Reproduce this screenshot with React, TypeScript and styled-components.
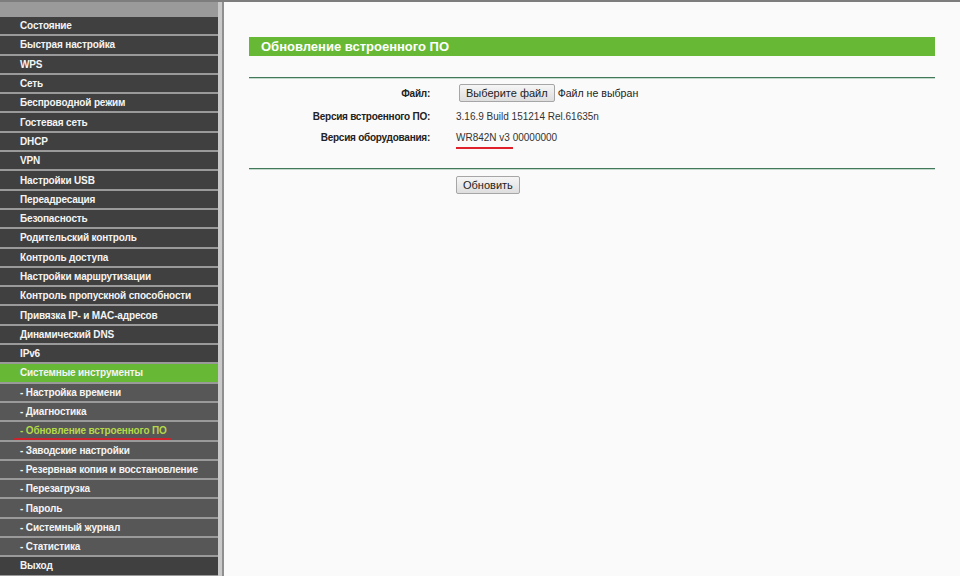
import React from "react";
import styled, { createGlobalStyle } from "styled-components";

const Global = createGlobalStyle`
  html, body { margin: 0; padding: 0; }
  body { font-family: "Liberation Sans", Arial, sans-serif; background: #fafafa; }
`;

const Page = styled.div`
  display: flex;
  width: 960px;
  height: 576px;
  overflow: hidden;
  border-top: 2px solid #7d7d7d;
  box-sizing: border-box;
`;

const Sidebar = styled.nav`
  width: 218px;
  flex: none;
  display: flex;
  flex-direction: column;
  background: #9a9a9a;
  padding-top: 15px;
`;

const Divider = styled.div`
  width: 6px;
  flex: none;
  background: #c9c9c9;
  border-right: 2px solid #8f8f8f;
  box-sizing: border-box;
`;

type ItemKind = "main" | "sub" | "active" | "current";

const Item = styled.div<{ $kind: ItemKind }>`
  height: 19.3px;
  flex: none;
  box-sizing: border-box;
  border-bottom: 2px solid #9a9a9a;
  padding-left: 20px;
  display: flex;
  align-items: center;
  font-size: 10px;
  letter-spacing: -0.15px;
  font-weight: bold;
  white-space: nowrap;
  background: ${(p) =>
    p.$kind === "main" ? "#404040" : p.$kind === "active" ? "#67b935" : "#575757"};
  color: ${(p) => (p.$kind === "current" ? "#b4d94a" : "#f4f4f4")};
`;

const Marked = styled.span`
  position: relative;
  &::after {
    content: "";
    position: absolute;
    left: -6px;
    right: -4px;
    bottom: -4px;
    height: 2px;
    background: #d0202a;
    border-radius: 1px;
  }
`;

const Content = styled.main`
  flex: 1;
  padding: 35px 25px 0 25px;
  background: #fafafa;
`;

const Title = styled.div`
  height: 19px;
  background: #67b935;
  color: #fff;
  font-size: 13px;
  font-weight: bold;
  display: flex;
  align-items: center;
  padding-left: 12px;
`;

const Rule = styled.div<{ $top: number }>`
  margin-top: ${(p) => p.$top}px;
  height: 0;
  border-top: 1px solid #41795a;
  border-bottom: 1px solid #c3d9cb;
`;

const Form = styled.div`
  display: grid;
  grid-template-columns: 181px 1fr;
  column-gap: 26px;
  padding-top: 4px;
`;

const Label = styled.div<{ $h: number }>`
  height: ${(p) => p.$h}px;
  display: flex;
  align-items: center;
  justify-content: flex-end;
  font-size: 10px;
  letter-spacing: -0.25px;
  font-weight: bold;
  color: #222;
`;

const Value = styled.div<{ $h: number }>`
  height: ${(p) => p.$h}px;
  display: flex;
  align-items: center;
  font-size: 10px;
  color: #333;
`;

const Button = styled.button<{ $ml?: number }>`
  font-family: "Liberation Sans", Arial, sans-serif;
  font-size: 11px;
  color: #222;
  height: 18px;
  padding: 0 6px;
  margin-left: ${(p) => p.$ml ?? 0}px;
  border: 1px solid #a6a6a6;
  border-radius: 2px;
  background: linear-gradient(#f6f6f6, #dedede);
  display: inline-flex;
  align-items: center;
`;

const FileName = styled.span`
  font-size: 10.6px;
  color: #222;
  margin-left: 3px;
`;

const Underlined = styled.span`
  position: relative;
  &::after {
    content: "";
    position: absolute;
    left: 0;
    width: 57px;
    bottom: -6px;
    height: 2px;
    background: #e0202a;
  }
`;

const Actions = styled.div`
  padding: 5px 0 0 207px;
`;

const menu: { t: string; k: ItemKind }[] = [
  { t: "Состояние", k: "main" },
  { t: "Быстрая настройка", k: "main" },
  { t: "WPS", k: "main" },
  { t: "Сеть", k: "main" },
  { t: "Беспроводной режим", k: "main" },
  { t: "Гостевая сеть", k: "main" },
  { t: "DHCP", k: "main" },
  { t: "VPN", k: "main" },
  { t: "Настройки USB", k: "main" },
  { t: "Переадресация", k: "main" },
  { t: "Безопасность", k: "main" },
  { t: "Родительский контроль", k: "main" },
  { t: "Контроль доступа", k: "main" },
  { t: "Настройки маршрутизации", k: "main" },
  { t: "Контроль пропускной способности", k: "main" },
  { t: "Привязка IP- и MAC-адресов", k: "main" },
  { t: "Динамический DNS", k: "main" },
  { t: "IPv6", k: "main" },
  { t: "Системные инструменты", k: "active" },
  { t: "- Настройка времени", k: "sub" },
  { t: "- Диагностика", k: "sub" },
  { t: "- Обновление встроенного ПО", k: "current" },
  { t: "- Заводские настройки", k: "sub" },
  { t: "- Резервная копия и восстановление", k: "sub" },
  { t: "- Перезагрузка", k: "sub" },
  { t: "- Пароль", k: "sub" },
  { t: "- Системный журнал", k: "sub" },
  { t: "- Статистика", k: "sub" },
  { t: "Выход", k: "main" },
];

export default function App() {
  return (
    <>
      <Global />
      <Page>
        <Sidebar>
          {menu.map((m) => (
            <Item key={m.t} $kind={m.k}>
              {m.k === "current" ? <Marked>{m.t}</Marked> : m.t}
            </Item>
          ))}
        </Sidebar>
        <Divider />
        <Content>
          <Title>Обновление встроенного ПО</Title>
          <Rule $top={21} />
          <Form>
            <Label $h={20}>Файл:</Label>
            <Value $h={20}>
              <Button $ml={3}>Выберите файл</Button>
              <FileName>Файл не выбран</FileName>
            </Value>
            <Label $h={26}>Версия встроенного ПО:</Label>
            <Value $h={26}>3.16.9 Build 151214 Rel.61635n</Value>
            <Label $h={16}>Версия оборудования:</Label>
            <Value $h={16}>
              <Underlined>WR842N v3 00000000</Underlined>
            </Value>
          </Form>
          <Rule $top={23} />
          <Actions>
            <Button>Обновить</Button>
          </Actions>
        </Content>
      </Page>
    </>
  );
}
